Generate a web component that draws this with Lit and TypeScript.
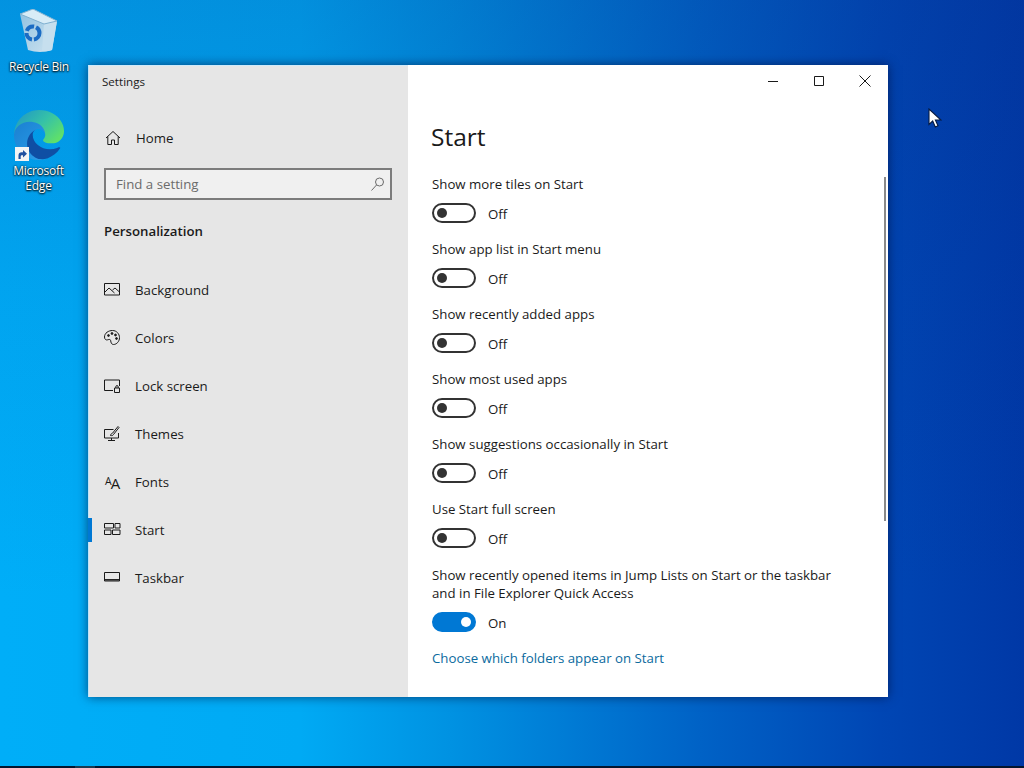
import { LitElement, html, css, svg } from "lit";
import { customElement } from "lit/decorators.js";

const navIcons: Record<string, unknown> = {
  Background: svg`<path d="M.5 2.500h15v11.500H.5z"/><path d="M.5 11.500l4.500-4.500 5.500 5M8.500 9l2.500-2 4.500 4"/>`,
  Colors: svg`<path d="M8.500 1.500C4.500 1.500.5 4 .5 8c0 2.500 1.700 3.300 3.200 2.800 1.500-.5 2.800-.6 3 .9.2 1.800.7 3.800 2.800 3.800 3.300 0 6-3.300 6-6.800 0-3.900-3-7.200-7-7.200z"/><circle cx="4.500" cy="6.500" r=".9" fill="#1a1a1a"/><circle cx="8" cy="4.500" r=".9" fill="#1a1a1a"/><circle cx="11.500" cy="6" r=".9" fill="#1a1a1a"/><circle cx="12.500" cy="9.500" r=".9" fill="#1a1a1a"/>`,
  "Lock screen": svg`<path d="M9 13.500H.5v-10.500h15v6"/><path d="M10.500 11h5v4.500h-5zM11.800 11V9.800a1.200 1.200 0 0 1 2.400 0V11"/>`,
  Themes: svg`<path d="M9.500 4.500H.5v8.500h14V8"/><path d="M7.500 15.500V13M4 15.500h7"/><path d="M6.500 10.500c.3-1.500 1-2 2-2.300L14 1.500l1 1L9.500 9.500c-.5 1-1.500 1.300-3 1z"/>`,
  Start: svg`<path d="M.5 2.500h9v4.500h-9zM11 2.500h5v4.500h-5zM.5 9h6.500v4.500H.5zM8.500 9H16v4.500H8.500z"/>`,
  Taskbar: svg`<path d="M.5 3.500h15v8.500H.5z"/><path d="M.5 10.800h15" stroke-width="1.500"/>`,
};

const navItems = ["Background", "Colors", "Lock screen", "Themes", "Fonts", "Start", "Taskbar"];

const toggles = [
  { label: "Show more tiles on Start", on: false },
  { label: "Show app list in Start menu", on: false },
  { label: "Show recently added apps", on: false },
  { label: "Show most used apps", on: false },
  { label: "Show suggestions occasionally in Start", on: false },
  { label: "Use Start full screen", on: false },
  { label: "Show recently opened items in Jump Lists on Start or the taskbar\nand in File Explorer Quick Access", on: true },
];

@customElement("app-root")
export class AppRoot extends LitElement {
  static styles = css`
    :host {
      display: block;
      width: 1024px;
      height: 768px;
      font-family: "Open Sans", "Noto Sans", sans-serif;
      color: #1a1a1a;
    }
    .desktop {
      position: relative;
      width: 1024px;
      height: 768px;
      overflow: hidden;
      background:
        linear-gradient(180deg, rgba(10, 50, 140, 0.22) 0, rgba(10, 50, 140, 0.08) 300px, rgba(10, 50, 140, 0) 600px),
        linear-gradient(90deg, #00aef8 0, #00aaf4 300px, #0092e2 450px, #0062c6 700px, #0046b4 880px, #0038a6 1024px);
    }
    .taskbar-edge {
      position: absolute;
      left: 0;
      right: 0;
      bottom: 0;
      height: 2px;
      background: #04152e;
    }
    .taskbar-edge::after {
      content: "";
      position: absolute;
      left: 75px;
      top: 0;
      width: 20px;
      height: 2px;
      background: #1c3a50;
    }
    .shortcut {
      position: absolute;
      width: 76px;
      display: flex;
      flex-direction: column;
      align-items: center;
      color: #fff;
      font-size: 12px;
      line-height: 15px;
      letter-spacing: -0.25px;
      text-align: center;
      text-shadow: 0 1px 2px #000, 0 0 2px #000;
    }
    .recycle { left: 1px; top: 9px; gap: 4px; }
    .edge { left: 1px; top: 110px; gap: 3px; }
    .edge span { margin-left: -1px; }
    .edge-wrap { position: relative; width: 50px; height: 50px; }
    .edge-wrap svg { display: block; }
    .arrow { position: absolute; left: 1px; bottom: -1px; }
    .pointer { position: absolute; left: 928px; top: 108px; }
    .window {
      position: absolute;
      left: 88px;
      top: 65px;
      width: 800px;
      height: 632px;
      display: flex;
      background: #fff;
      box-shadow: 0 0 10px rgba(0, 10, 50, 0.6);
    }
    .sidebar {
      width: 320px;
      flex: none;
      background: #e6e6e6;
      display: flex;
      flex-direction: column;
      border-left: 1px solid #bfe3f8;
      border-top: 1px solid #cfeafa;
      box-sizing: border-box;
    }
    .title {
      font-size: 11.6px;
      line-height: 16px;
      margin: 8px 0 0 13px;
    }
    .home {
      display: flex;
      align-items: center;
      margin: 36px 0 0 15px;
      height: 24px;
      font-size: 13.25px;
      gap: 14px;
    }
    .search {
      margin: 18px 16px 0 15px;
      height: 32px;
      box-sizing: border-box;
      border: 2px solid #7c7c7c;
      background: #f0f0f0;
      display: flex;
      align-items: center;
      justify-content: space-between;
      padding: 0 4px 0 10px;
      font-size: 13.25px;
      color: #6b6b6b;
    }
    .section {
      margin: 21px 0 0 15px;
      font-size: 13.25px;
      line-height: 20px;
      font-weight: 600;
    }
    nav { margin-top: 25px; display: flex; flex-direction: column; }
    .nav-item {
      position: relative;
      height: 48px;
      display: flex;
      align-items: center;
      gap: 13px;
      padding-left: 15px;
      font-size: 13.25px;
    }
    .nav-item.active::before {
      content: "";
      position: absolute;
      left: -1px;
      top: 12px;
      width: 4px;
      height: 24px;
      background: #0078d4;
    }
    .ico { width: 18px; height: 18px; flex: none; fill: none; stroke: #1a1a1a; stroke-width: 1; }
    .font-ico {
      width: 18px;
      text-align: left;
      font-size: 15px;
      line-height: 18px;
      letter-spacing: -1px;
      padding-left: 1px;
      box-sizing: border-box;
      white-space: nowrap;
    }
    .font-ico small { font-size: 10.5px; vertical-align: 4px; }
    .main {
      flex: 1;
      position: relative;
      display: flex;
      flex-direction: column;
      padding-left: 24px;
    }
    .controls {
      position: absolute;
      top: 0;
      right: 0;
      display: flex;
    }
    .controls div {
      width: 46px;
      height: 32px;
      display: flex;
      align-items: center;
      justify-content: center;
    }
    .controls svg { fill: none; stroke: #1a1a1a; stroke-width: 1; display: block; }
    h1 {
      margin: 50px 0 16px -1px;
      font-size: 24.5px;
      line-height: 44px;
      font-weight: 400;
    }
    .row { display: flex; flex-direction: column; height: 65px; }
    .row.tall { height: 82px; margin-top: 1px; }
    .label { font-size: 13.25px; line-height: 18px; white-space: pre-line; }
    .toggle-row {
      display: flex;
      align-items: center;
      gap: 12px;
      margin-top: 10px;
      font-size: 13.25px;
      height: 20px;
    }
    .toggle-row span { margin-top: 2px; }
    .switch {
      width: 44px;
      height: 20px;
      box-sizing: border-box;
      border: 2px solid #333;
      border-radius: 10px;
      position: relative;
    }
    .switch::after {
      content: "";
      position: absolute;
      left: 3px;
      top: 3px;
      width: 10px;
      height: 10px;
      border-radius: 50%;
      background: #333;
    }
    .switch.on { background: #0078d4; border-color: #0078d4; }
    .switch.on::after { left: auto; right: 3px; background: #fff; }
    .link { font-size: 13.25px; line-height: 20px; color: #0a6a9e; }
    .scrollbar {
      position: absolute;
      right: 2px;
      top: 112px;
      width: 2px;
      height: 344px;
      background: #8a8a8a;
    }
  `;

  render() {
    return html`
      <div class="desktop">
        <div class="shortcut recycle">
          <svg width="44" height="46" viewBox="0 0 44 46">
            <defs>
              <linearGradient id="b1" x1="0" y1="0" x2="1" y2="1">
                <stop offset="0" stop-color="#8fc0e0"/>
                <stop offset="1" stop-color="#cfe4f0"/>
              </linearGradient>
            </defs>
            <path d="M3 5 L16 0 L40 12 L35 41 Q23 45 11 41 Z" fill="url(#b1)"/>
            <path d="M27 14 L40 12 L35 41 Q30 43 25 42 Z" fill="#c6dfee"/>
            <path d="M3 5 L16 0 L40 12 L27 15 Z" fill="#d8ecf7" stroke="#7fb0d0" stroke-width="1"/>
            <circle cx="16" cy="24" r="6.500" fill="none" stroke="#1b6cc4" stroke-width="4" stroke-dasharray="9 2"/>
          </svg>
          <span>Recycle Bin</span>
        </div>
        <div class="shortcut edge">
          <div class="edge-wrap">
            <svg width="50" height="50" viewBox="0 0 256 256">
              <defs>
                <linearGradient id="e1" x1="0" y1="0" x2="1" y2="0.7">
                  <stop offset="0" stop-color="#1f93c8"/>
                  <stop offset="0.55" stop-color="#35c1a8"/>
                  <stop offset="1" stop-color="#5fe06a"/>
                </linearGradient>
                <linearGradient id="e2" x1="0" y1="0" x2="0.8" y2="1">
                  <stop offset="0" stop-color="#1a7fd0"/>
                  <stop offset="1" stop-color="#2a9ce8"/>
                </linearGradient>
              </defs>
              <path d="M231 190c-3.400 1.800-6.900 3.400-10.500 4.700-11.500 4.300-23.700 6.500-36 6.500-47.500 0-88.800-32.700-88.800-74.600 0-11.900 6.800-22.200 17.200-27.800-42.900 1.800-53.900 46.500-53.900 72.700 0 74 68.200 81.500 82.900 81.500 7.900 0 19.900-2.300 27.100-4.600l1.300-.4c27.600-9.500 51-28.200 66.500-52.900 1.200-1.900-.8-4.100-2.800-3.100z" fill="#0f4fa4"/>
              <path d="M105 241c-8.900-5.500-16.600-12.800-22.700-21.300-26-35.600-18.200-85.600 17.400-111.600 3.700-2.700 7.600-5.100 11.800-7.100 3.100-1.500 8.400-4.100 15.500-4 10.100.1 19.600 4.900 25.700 13 4 5.400 6.300 12 6.300 18.700 0-.2 24.500-79.700-80-79.700C35.500 48.900 0 90.500 0 127c-.2 19.300 3.900 38.400 12.100 55.900 27.600 58.900 94.900 87.800 156.600 67.200-21.100 6.600-44.100 3.700-62.900-8.100z" fill="url(#e2)"/>
              <path d="M152 149c-.8 1.100-3.300 2.600-3.300 5.700 0 2.600 1.700 5.100 4.800 7.300 14.600 10.200 42.200 8.800 42.300 8.800 10.800 0 21.400-2.900 30.700-8.400C245 151.300 256 130.500 256 108.800 256.300 86 247.900 70.800 244.500 64 223 22 177.300 0 128 0 58.600 0 2.100 55.700 1.100 125.100c.5-36.200 36.500-65.500 79.200-65.500 3.500 0 23.300.3 41.800 10 16.300 8.500 24.800 18.800 30.700 29.100 6.200 10.600 7.300 24.100 7.300 29.400 0 5.400-2.700 13.400-7.800 20z" fill="url(#e1)"/>
            </svg>
            <svg class="arrow" width="14" height="14" viewBox="0 0 14 14">
              <rect width="14" height="14" fill="#f4f4f4"/>
              <path d="M3.500 12V8.500c0-2 1.200-3.200 3.200-3.200H8V3l4 3.800L8 10.500V8.200H7c-1 0-1.300.5-1.300 1.500V12z" fill="#1f4f9f"/>
            </svg>
          </div>
          <span>Microsoft<br />Edge</span>
        </div>
        <svg class="pointer" width="14" height="21" viewBox="0 0 14 21">
          <path d="M1 1v15.500l3.700-3.500 2.600 6 2.700-1.200-2.600-5.800H13z" fill="#fff" stroke="#071a40" stroke-width="1.100"/>
        </svg>

        <div class="window">
          <aside class="sidebar">
            <div class="title">Settings</div>
            <div class="home">
              <svg class="ico" viewBox="0 0 18 18">
                <path d="M2 9 9 2.500 16 9M3.800 7.500V15.500h3.700V11h3v4.500h3.700V7.500"/>
              </svg>
              <span>Home</span>
            </div>
            <div class="search">
              <span>Find a setting</span>
              <svg class="ico" viewBox="0 0 18 18" style="stroke:#6b6b6b">
                <circle cx="11.500" cy="7" r="4"/>
                <path d="M8.500 10 3.500 15.500"/>
              </svg>
            </div>
            <div class="section">Personalization</div>
            <nav>
              ${navItems.map(
                (n) => html`<div class="nav-item ${n === "Start" ? "active" : ""}">
                  ${n === "Fonts"
                    ? html`<div class="font-ico"><small>A</small>A</div>`
                    : html`<svg class="ico" viewBox="0 0 18 18">${navIcons[n]}</svg>`}
                  <span>${n}</span>
                </div>`
              )}
            </nav>
          </aside>
          <main class="main">
            <div class="controls">
              <div><svg width="12" height="12" viewBox="0 0 12 12"><path d="M1 6.500h10"/></svg></div>
              <div><svg width="12" height="12" viewBox="0 0 12 12"><path d="M1.500 1.500h9v9h-9z"/></svg></div>
              <div><svg width="12" height="12" viewBox="0 0 12 12"><path d="M.5.5l11 11M11.500.5l-11 11"/></svg></div>
            </div>
            <h1>Start</h1>
            ${toggles.map(
              (t) => html`<div class="row ${t.on ? "tall" : ""}">
                <div class="label">${t.label}</div>
                <div class="toggle-row">
                  <div class="switch ${t.on ? "on" : ""}"></div>
                  <span>${t.on ? "On" : "Off"}</span>
                </div>
              </div>`
            )}
            <div class="link">Choose which folders appear on Start</div>
            <div class="scrollbar"></div>
          </main>
        </div>
        <div class="taskbar-edge"></div>
      </div>
    `;
  }
}
